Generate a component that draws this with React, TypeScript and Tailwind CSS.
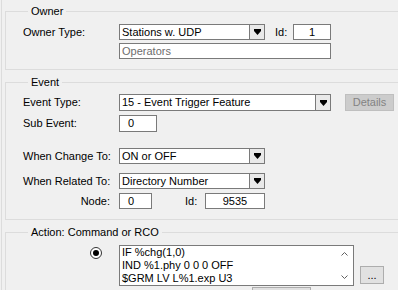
import React from 'react';

const Arrow = () => (
  <svg width="7" height="6" viewBox="0 0 7 6" className="block">
    <path d="M0 0h7v2H0z" fill="#000" />
    <path d="M0 2h7L3.5 6z" fill="#000" />
  </svg>
);

const Combo: React.FC<{ value: string; width: string }> = ({ value, width }) => (
  <div className={`${width} h-[16px] flex border border-[#7a7a7a] bg-white`}>
    <div className="flex-1 flex items-center pl-[2px] leading-[13px] overflow-hidden whitespace-nowrap">{value}</div>
    <div className="w-[15px] border-l border-[#7a7a7a] bg-[#e9e9e9] flex items-center justify-center">
      <Arrow />
    </div>
  </div>
);

const Box: React.FC<{ value: string; width: string; className?: string }> = ({ value, width, className = '' }) => (
  <div className={`${width} h-[16px] border border-[#7a7a7a] bg-white flex items-center leading-[13px] ${className}`}>
    {value}
  </div>
);

const Group: React.FC<{ title: string; className?: string; children: React.ReactNode }> = ({ title, className = '', children }) => (
  <fieldset className={`w-[420px] border border-[#dcdcdc] pl-[17px] ${className}`}>
    <legend className="ml-[5px] px-[3px] leading-[13px]">{title}</legend>
    {children}
  </fieldset>
);

export default function App() {
  return (
    <div
      className="w-[398px] h-[290px] overflow-hidden bg-[#f0f0f0] text-[11px] text-black pl-[1px]"
      style={{ fontFamily: '"Liberation Sans", Arial, sans-serif' }}
    >
      <div className="h-full border-l border-[#dcdcdc] pl-[3px] pt-[5px]">
        {/* Owner */}
        <Group title="Owner" className="pt-[6px] pb-[10px]">
          <div className="flex items-center h-[16px]">
            <span className="w-[96px]">Owner Type:</span>
            <Combo value="Stations w. UDP" width="w-[146px]" />
            <span className="ml-[10px] w-[18px]">Id:</span>
            <Box value="1" width="w-[38px]" className="justify-center" />
          </div>
          <div className="flex mt-[3px]">
            <Box value="Operators" width="w-[212px]" className="ml-[96px] pl-[2px] text-[#6d6d6d]" />
          </div>
        </Group>

        {/* Event */}
        <Group title="Event" className="mt-[6px] pt-[5px] pb-[10px]">
          <div className="flex items-center h-[17px]">
            <span className="w-[96px]">Event Type:</span>
            <Combo value="15 - Event Trigger Feature" width="w-[212px] !h-[17px]" />
            <div className="ml-[14px] w-[49px] h-[17px] border border-[#bfbfbf] bg-[#cccccc] text-[#838383] flex items-center justify-center">
              Details
            </div>
          </div>
          <div className="flex items-center h-[17px] mt-[4px]">
            <span className="w-[96px]">Sub Event:</span>
            <Box value="0" width="w-[38px] !h-[17px]" className="pl-[8px]" />
          </div>
          <div className="flex items-center h-[16px] mt-[16px]">
            <span className="w-[96px]">When Change To:</span>
            <Combo value="ON or OFF" width="w-[146px]" />
          </div>
          <div className="flex items-center h-[16px] mt-[9px]">
            <span className="w-[96px]">When Related To:</span>
            <Combo value="Directory Number" width="w-[146px]" />
          </div>
          <div className="flex items-center h-[16px] mt-[4px]">
            <span className="w-[96px] text-right pr-[9px]">Node:</span>
            <Box value="0" width="w-[33px]" className="pl-[8px]" />
            <span className="ml-[33px] w-[20px]">Id:</span>
            <Box value="9535" width="w-[60px]" className="justify-center" />
          </div>
        </Group>

        {/* Action */}
        <Group title="Action: Command or RCO" className="mt-[6px] pt-[6px]">
          <div className="flex">
            <div className="w-[96px] pl-[67px] pt-[2px]">
              <div className="w-[12px] h-[12px] rounded-full border border-[#333] bg-white flex items-center justify-center">
                <div className="w-[6px] h-[6px] rounded-full bg-black" />
              </div>
            </div>
            <div className="w-[235px] h-[41px] border border-[#7a7a7a] bg-white flex">
              <div className="flex-1 pl-[2px] leading-[13px] whitespace-nowrap overflow-hidden">
                <div>IF %chg(1,0)</div>
                <div>IND %1.phy 0 0 0 OFF</div>
                <div>$GRM LV L%1.exp U3</div>
              </div>
              <div className="w-[17px] flex flex-col justify-between items-center py-[6px]">
                <svg width="7" height="4" viewBox="0 0 7 4">
                  <path d="M0.5 3.5L3.5 0.5L6.5 3.5" stroke="#606060" fill="none" />
                </svg>
                <svg width="7" height="4" viewBox="0 0 7 4">
                  <path d="M0.5 0.5L3.5 3.5L6.5 0.5" stroke="#606060" fill="none" />
                </svg>
              </div>
            </div>
            <div className="ml-[6px] mt-[21px] w-[24px] h-[18px] border border-[#adadad] bg-[#e1e1e1] flex items-center justify-center leading-[11px]">
              ...
            </div>
          </div>
          <div className="ml-[229px] mt-[1px] w-[59px] h-[20px] border border-[#adadad] bg-[#e1e1e1]" />
        </Group>
      </div>
    </div>
  );
}
